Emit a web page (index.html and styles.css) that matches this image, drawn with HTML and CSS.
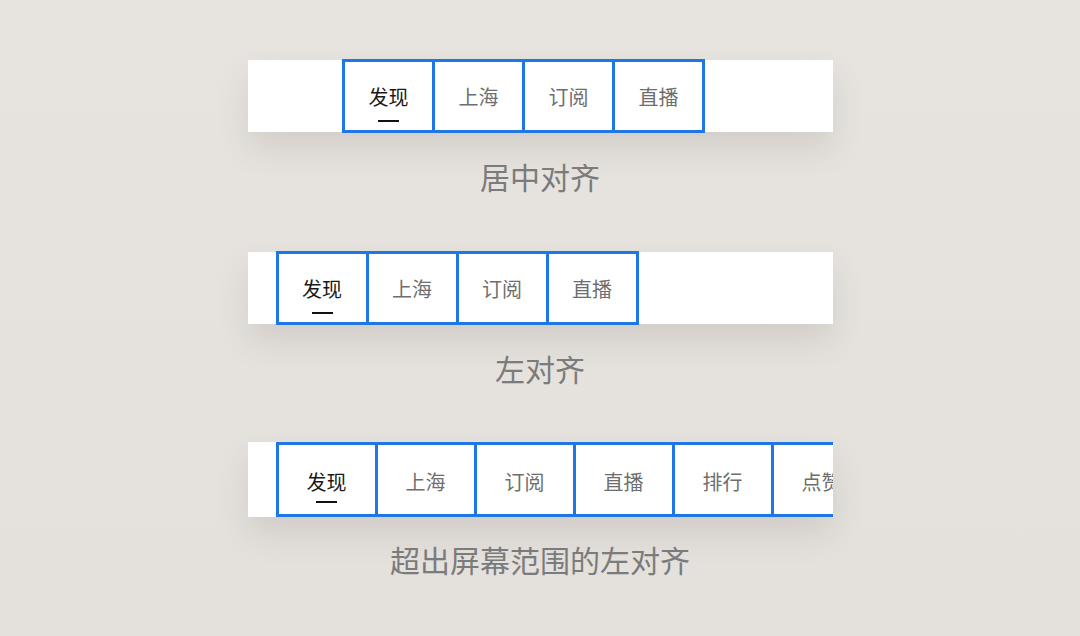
FILE: index.html
```html
<!DOCTYPE html>
<html lang="zh-CN">
  <head>
    <meta charset="UTF-8" />
    <meta name="viewport" content="width=device-width, initial-scale=1.0" />
    <title>标签栏对齐方式</title>
    <link rel="stylesheet" href="styles.css">
  </head>
  <body>
    <div class="demo">
      <div class="barra barra-centro">
        <div class="abas">
          <div class="aba ativa"><span>发现</span><i class="traco"></i></div>
          <div class="aba"><span>上海</span></div>
          <div class="aba"><span>订阅</span></div>
          <div class="aba"><span>直播</span></div>
        </div>
      </div>
      <p class="legenda">居中对齐</p>
    </div>

    <div class="demo">
      <div class="barra barra-esquerda">
        <div class="abas">
          <div class="aba ativa"><span>发现</span><i class="traco"></i></div>
          <div class="aba"><span>上海</span></div>
          <div class="aba"><span>订阅</span></div>
          <div class="aba"><span>直播</span></div>
        </div>
      </div>
      <p class="legenda">左对齐</p>
    </div>

    <div class="demo demo-rolagem">
      <div class="barra barra-rolagem">
        <div class="abas">
          <div class="aba ativa"><span>发现</span><i class="traco"></i></div>
          <div class="aba"><span>上海</span></div>
          <div class="aba"><span>订阅</span></div>
          <div class="aba"><span>直播</span></div>
          <div class="aba"><span>排行</span></div>
          <div class="aba"><span>点赞</span></div>
        </div>
      </div>
      <p class="legenda">超出屏幕范围的左对齐</p>
    </div>
  </body>
</html>
```

FILE: styles.css
```css
* {
  margin: 0;
  padding: 0;
  box-sizing: border-box;
}

body {
  background: linear-gradient(180deg, #e7e4df 0%, #e4e1dc 100%);
  font-family: "Noto Sans CJK SC", "Noto Sans", sans-serif;
  height: 636px;
  overflow: hidden;
  padding-top: 60px;
  display: flex;
  flex-direction: column;
  align-items: center;
  gap: 56px;
}

.demo {
  display: flex;
  flex-direction: column;
  align-items: center;
}

.demo-rolagem {
  margin-top: -2px;
}

.barra {
  width: 585px;
  height: 72px;
  background-color: white;
  display: flex;
  box-shadow: 0 18px 32px rgba(70, 60, 50, 0.12);
}

.barra-centro {
  justify-content: center;
  padding-right: 33px;
}

.barra-esquerda {
  padding-left: 28px;
}

/* a faixa que rola: as abas passam da borda direita */
.barra-rolagem {
  height: 75px;
  padding-left: 28px;
  overflow: hidden;
}

.abas {
  display: flex;
  flex-shrink: 0;
  margin: -1px 0;
}

.barra-rolagem .abas {
  margin: 0;
}

.aba {
  width: 93px;
  height: 74px;
  border: 3px solid #1f77e5;
  display: flex;
  flex-direction: column;
  align-items: center;
  padding-top: 23px;
  flex-shrink: 0;
}

.aba + .aba {
  margin-left: -3px;
}

.barra-rolagem .aba {
  width: 102px;
  height: 75px;
  padding-top: 25px;
}

.aba span {
  font-size: 20px;
  line-height: 24px;
  color: #6e6e6e;
}

.aba.ativa span {
  color: #1a1a1a;
}

.traco {
  width: 21px;
  height: 2px;
  margin-top: 11px;
  background-color: #111;
}

.barra-rolagem .traco {
  margin-top: 7px;
}

.legenda {
  margin-top: 24px;
  font-size: 30px;
  line-height: 40px;
  color: #7b7b7b;
}

.demo-rolagem .legenda {
  margin-top: 22px;
}
```
